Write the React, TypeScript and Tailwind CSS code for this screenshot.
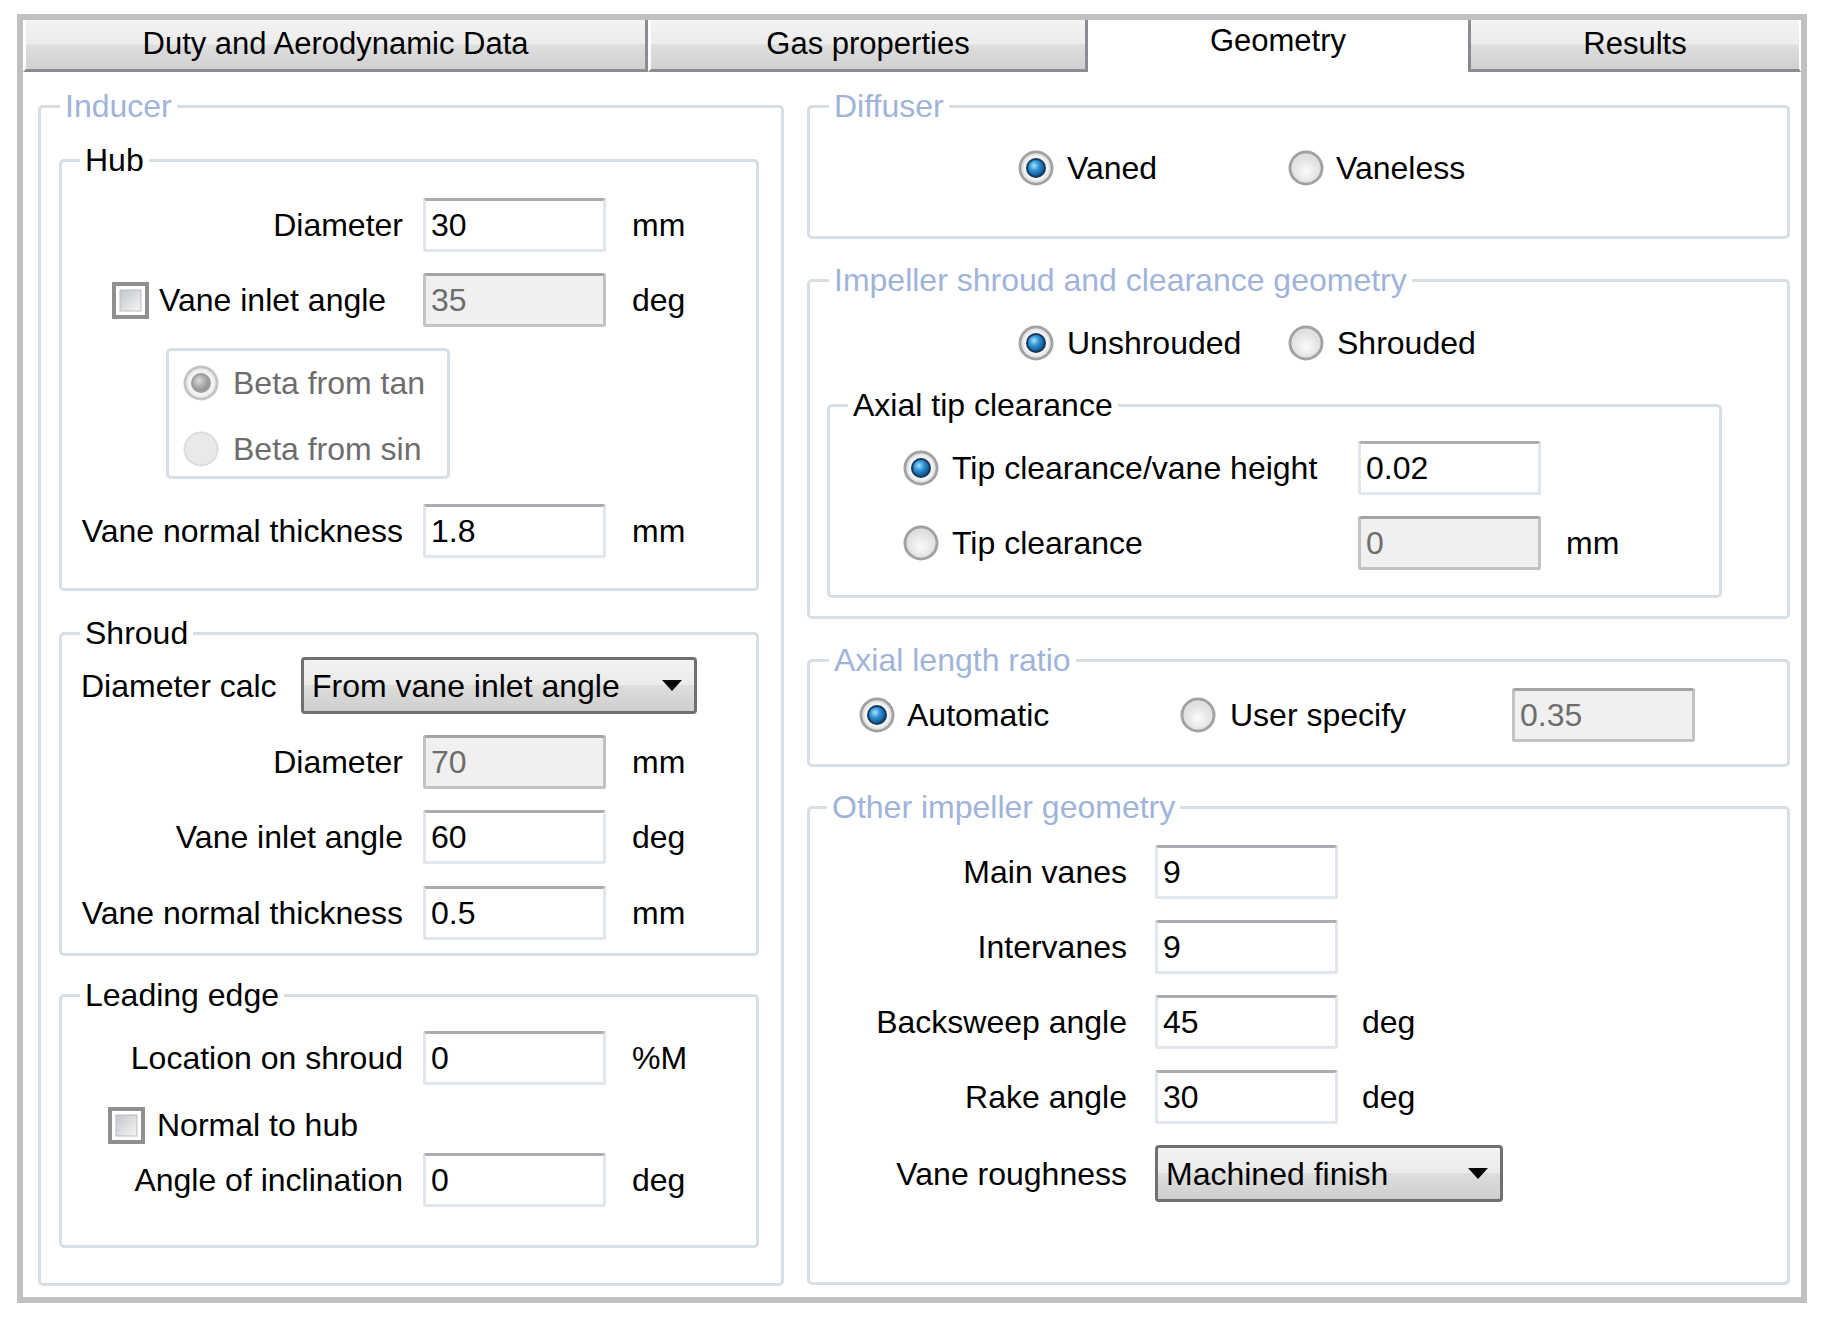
import React from "react";

// --- small win7-ish controls ---

function Radio({ checked = false, disabled = false }: { checked?: boolean; disabled?: boolean }) {
  if (disabled && !checked) {
    return (
      <svg width="36" height="36" viewBox="0 0 36 36" className="shrink-0">
        <circle cx="18" cy="18" r="16.5" fill="#e9e9e9" stroke="#dcdcdc" strokeWidth="2" />
      </svg>
    );
  }
  return (
    <svg width="36" height="36" viewBox="0 0 36 36" className="shrink-0">
      <defs>
        <radialGradient id="rbFill" cx="0.5" cy="0.6" r="0.6">
          <stop offset="0" stopColor="#fbfbfb" />
          <stop offset="1" stopColor="#d6d6d6" />
        </radialGradient>
        <radialGradient id="rbBlue" cx="0.38" cy="0.35" r="0.7">
          <stop offset="0" stopColor="#a8e2fb" />
          <stop offset="0.45" stopColor="#2f93d6" />
          <stop offset="1" stopColor="#0b4f86" />
        </radialGradient>
        <radialGradient id="rbGrey" cx="0.38" cy="0.35" r="0.7">
          <stop offset="0" stopColor="#dcdcdc" />
          <stop offset="0.5" stopColor="#b0b0b0" />
          <stop offset="1" stopColor="#8e8e8e" />
        </radialGradient>
      </defs>
      <circle
        cx="18"
        cy="18"
        r="16"
        fill={checked ? "#f3f3f3" : "url(#rbFill)"}
        stroke={disabled ? "#c4c4c4" : "#a2a2a2"}
        strokeWidth="3"
      />
      <circle cx="18" cy="18" r="13.5" fill="none" stroke={disabled ? "#ececec" : "#e2e2e2"} strokeWidth="1.5" />
      {checked && (
        <>
          <circle cx="18" cy="18" r="10" fill={disabled ? "#9e9e9e" : "#15375a"} />
          <circle cx="18" cy="18" r="8" fill={disabled ? "url(#rbGrey)" : "url(#rbBlue)"} />
        </>
      )}
    </svg>
  );
}

function Checkbox() {
  return (
    <svg width="37" height="37" viewBox="0 0 37 37" className="shrink-0">
      <defs>
        <linearGradient id="cbFill" x1="0" y1="0" x2="1" y2="1">
          <stop offset="0" stopColor="#c1c5cb" />
          <stop offset="1" stopColor="#f6f6f6" />
        </linearGradient>
      </defs>
      <rect x="2" y="2" width="33" height="33" fill="#ffffff" stroke="#8e8f8f" strokeWidth="4" />
      <rect x="8" y="8" width="21" height="21" fill="url(#cbFill)" stroke="#b9bdc3" strokeWidth="1" />
    </svg>
  );
}

function Arrow() {
  return (
    <svg width="20" height="11" viewBox="0 0 20 11" className="shrink-0">
      <path d="M0 0 H20 L10 11 Z" fill="#000" />
    </svg>
  );
}

function Field({ value, disabled = false }: { value: string; disabled?: boolean }) {
  return (
    <div
      className={`h-[54px] w-[183px] shrink-0 rounded-[3px] border-[3px] flex items-center pl-[5px] ${
        disabled
          ? "bg-[#f0f0f0] border-[#c3c3c3] border-t-[#a4a4a4] text-[#6d6d6d]"
          : "bg-white border-[#e1e6ec] border-t-[#abadb3] text-black"
      }`}
    >
      {value}
    </div>
  );
}

function Combo({ value, w }: { value: string; w: string }) {
  return (
    <div
      className={`${w} h-[57px] shrink-0 rounded-[4px] border-[3px] border-[#707070] bg-[linear-gradient(#f2f2f2,#ebebeb_50%,#dddddd_50%,#cfcfcf)] flex items-center justify-between pl-[8px] pr-[12px] text-black`}
    >
      <span>{value}</span>
      <Arrow />
    </div>
  );
}

function Group({
  title,
  dim = false,
  className = "",
  legendOffset = "ml-[19px]",
  children,
}: {
  title: string;
  dim?: boolean;
  className?: string;
  legendOffset?: string;
  children: React.ReactNode;
}) {
  return (
    <fieldset className={`border-[3px] border-[#d5dfe5] rounded-[5px] ${className}`}>
      <legend className={`${legendOffset} px-[5px] leading-[36px] ${dim ? "text-[#a0b4da]" : "text-black"}`}>
        {title}
      </legend>
      {children}
    </fieldset>
  );
}

// left column row: right-aligned label, box, unit
function LRow({
  label,
  value,
  unit,
  disabled,
  className = "",
}: {
  label: string;
  value: string;
  unit: string;
  disabled?: boolean;
  className?: string;
}) {
  return (
    <div className={`flex items-center h-[54px] ${className}`}>
      <div className="w-[341px] text-right">{label}</div>
      <div className="ml-[20px]">
        <Field value={value} disabled={disabled} />
      </div>
      <div className="ml-[26px]">{unit}</div>
    </div>
  );
}

function RRow({ label, value, unit, className = "" }: { label: string; value: string; unit?: string; className?: string }) {
  return (
    <div className={`flex items-center h-[54px] ${className}`}>
      <div className="w-[317px] text-right">{label}</div>
      <div className="ml-[28px]">
        <Field value={value} />
      </div>
      {unit && <div className="ml-[24px]">{unit}</div>}
    </div>
  );
}

const tabs = [
  { name: "Duty and Aerodynamic Data", w: "w-[625px]" },
  { name: "Gas properties", w: "w-[440px]" },
  { name: "Geometry", w: "w-[380px]", active: true },
  { name: "Results", w: "w-[333px]" },
];

export default function App() {
  return (
    <div className="w-[1824px] h-[1322px] bg-white overflow-hidden pt-[14px] pl-[17px] font-['Liberation_Sans',Arial,sans-serif] text-[32px] text-black">
      <div className="w-[1790px] h-[1289px] border-[6px] border-[#c0c0c0] bg-white flex flex-col">
        {/* tab strip */}
        <div className="flex h-[52px] shrink-0">
          {tabs.map((t) =>
            t.active ? (
              <div key={t.name} className={`${t.w} h-[52px] bg-white flex items-center justify-center pb-[10px] text-[31px]`}>
                {t.name}
              </div>
            ) : (
              <div
                key={t.name}
                className={`${t.w} h-[52px] border-b-[3px] border-b-[#898c90] ${
                  t.name === "Results"
                    ? "border-l-[3px] border-l-[#898c90] border-r-[2px] border-r-white"
                    : "border-l-[3px] border-l-white border-r-[3px] border-r-[#898c90]"
                } bg-[linear-gradient(#f3f3f3,#ececec_48%,#dedede_52%,#d0d0d0)] flex items-center justify-center text-[31px]`}
              >
                {t.name}
              </div>
            )
          )}
        </div>

        {/* page body */}
        <div className="flex gap-[23px] pl-[15px] pt-[16px]">
          {/* left column */}
          <Group title="Inducer" dim legendOffset="ml-[1px]" className="w-[746px] pl-[18px] pb-[35px]">
            <Group title="Hub" legendOffset="ml-[18px]" className="mt-[18px] w-[700px] pb-[30px]">
              <LRow label="Diameter" value="30" unit="mm" className="mt-[20px]" />
              <div className="flex items-center h-[54px] mt-[21px]">
                <div className="w-[341px] flex items-center pl-[50px] gap-[10px]">
                  <Checkbox />
                  <span>Vane inlet angle</span>
                </div>
                <div className="ml-[20px]">
                  <Field value="35" disabled />
                </div>
                <div className="ml-[26px]">deg</div>
              </div>
              <div className="mt-[21px] ml-[104px] w-[284px] h-[131px] border-[3px] border-[#d5dfe5] rounded-[5px] pl-[14px] pt-[12px] text-[#6d6d6d]">
                <div className="flex items-center gap-[14px] h-[40px]">
                  <Radio checked disabled />
                  <span>Beta from tan</span>
                </div>
                <div className="flex items-center gap-[14px] h-[40px] mt-[26px]">
                  <Radio disabled />
                  <span>Beta from sin</span>
                </div>
              </div>
              <LRow label="Vane normal thickness" value="1.8" unit="mm" className="mt-[25px]" />
            </Group>

            <Group title="Shroud" legendOffset="ml-[18px]" className="mt-[24px] w-[700px] pb-[13px]">
              <div className="flex items-center mt-[6px] h-[57px]">
                <div className="w-[239px] pl-[19px]">Diameter calc</div>
                <Combo value="From vane inlet angle" w="w-[396px]" />
              </div>
              <LRow label="Diameter" value="70" unit="mm" disabled className="mt-[21px]" />
              <LRow label="Vane inlet angle" value="60" unit="deg" className="mt-[21px]" />
              <LRow label="Vane normal thickness" value="0.5" unit="mm" className="mt-[22px]" />
            </Group>

            <Group title="Leading edge" legendOffset="ml-[18px]" className="mt-[21px] w-[700px] pb-[38px]">
              <LRow label="Location on shroud" value="0" unit="%M" className="mt-[18px]" />
              <div className="flex items-center h-[40px] mt-[20px] pl-[46px] gap-[12px]">
                <Checkbox />
                <span>Normal to hub</span>
              </div>
              <LRow label="Angle of inclination" value="0" unit="deg" className="mt-[8px]" />
            </Group>
          </Group>

          {/* right column */}
          <div className="w-[983px] flex flex-col">
            <Group title="Diffuser" dim className="pb-[48px]">
              <div className="flex items-center h-[40px] mt-[24px] pl-[208px]">
                <div className="w-[270px] flex items-center gap-[13px]">
                  <Radio checked />
                  <span>Vaned</span>
                </div>
                <div className="flex items-center gap-[12px]">
                  <Radio />
                  <span>Vaneless</span>
                </div>
              </div>
            </Group>

            <Group title="Impeller shroud and clearance geometry" dim className="mt-[23px] pb-[18px]">
              <div className="flex items-center h-[40px] mt-[25px] pl-[208px]">
                <div className="w-[270px] flex items-center gap-[13px]">
                  <Radio checked />
                  <span>Unshrouded</span>
                </div>
                <div className="flex items-center gap-[13px]">
                  <Radio />
                  <span>Shrouded</span>
                </div>
              </div>
              <Group title="Axial tip clearance" legendOffset="ml-[18px]" className="mt-[24px] ml-[17px] w-[895px] pb-[25px]">
                <div className="flex items-center h-[54px] mt-[18px] pl-[73px]">
                  <div className="w-[455px] flex items-center gap-[13px]">
                    <Radio checked />
                    <span>Tip clearance/vane height</span>
                  </div>
                  <Field value="0.02" />
                </div>
                <div className="flex items-center h-[54px] mt-[21px] pl-[73px]">
                  <div className="w-[455px] flex items-center gap-[13px]">
                    <Radio />
                    <span>Tip clearance</span>
                  </div>
                  <Field value="0" disabled />
                  <div className="ml-[25px]">mm</div>
                </div>
              </Group>
            </Group>

            <Group title="Axial length ratio" dim className="mt-[23px] pb-[22px]">
              <div className="flex items-center h-[54px] mt-[10px] pl-[49px]">
                <div className="w-[321px] flex items-center gap-[12px]">
                  <Radio checked />
                  <span>Automatic</span>
                </div>
                <div className="w-[332px] flex items-center gap-[14px]">
                  <Radio />
                  <span>User specify</span>
                </div>
                <Field value="0.35" disabled />
              </div>
            </Group>

            <Group title="Other impeller geometry" dim className="mt-[22px] pb-[80px]" legendOffset="ml-[17px]">
              <RRow label="Main vanes" value="9" className="mt-[20px]" />
              <RRow label="Intervanes" value="9" className="mt-[21px]" />
              <RRow label="Backsweep angle" value="45" unit="deg" className="mt-[21px]" />
              <RRow label="Rake angle" value="30" unit="deg" className="mt-[21px]" />
              <div className="flex items-center h-[57px] mt-[21px]">
                <div className="w-[317px] text-right">Vane roughness</div>
                <div className="ml-[28px]">
                  <Combo value="Machined finish" w="w-[348px]" />
                </div>
              </div>
            </Group>
          </div>
        </div>
      </div>
    </div>
  );
}
